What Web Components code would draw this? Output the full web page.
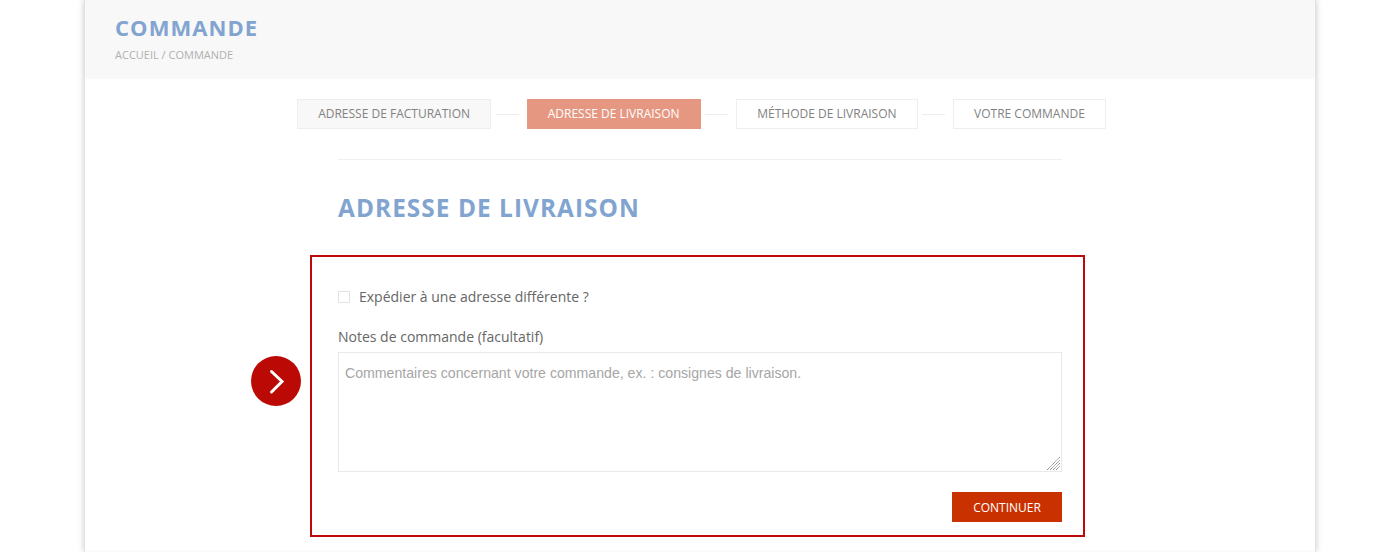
<!DOCTYPE html>
<html lang="fr">
<head>
<meta charset="utf-8">
<title>Commande</title>
<style>
html,body{margin:0;padding:0;background:#fff;height:552px;overflow:hidden}
body{font-family:"Open Sans",sans-serif}
</style>
</head>
<body>
<page-shell>
  <page-header title-text="COMMANDE" crumb="ACCUEIL / COMMANDE"></page-header>
  <step-bar>
    <step-item kind="done">ADRESSE DE FACTURATION</step-item>
    <step-item kind="active">ADRESSE DE LIVRAISON</step-item>
    <step-item>MÉTHODE DE LIVRAISON</step-item>
    <step-item>VOTRE COMMANDE</step-item>
  </step-bar>
  <checkout-section heading="ADRESSE DE LIVRAISON">
    <highlight-box>
      <check-row>Expédier à une adresse différente ?</check-row>
      <notes-field label="Notes de commande (facultatif)" placeholder="Commentaires concernant votre commande, ex. : consignes de livraison."></notes-field>
      <action-button>CONTINUER</action-button>
    </highlight-box>
  </checkout-section>
  <page-footer></page-footer>
</page-shell>
<script>
function def(name, css, html, init){
  customElements.define(name, class extends HTMLElement{
    constructor(){
      super();
      const r=this.attachShadow({mode:'open'});
      r.innerHTML='<style>'+css+'</style>'+html;
    }
    connectedCallback(){ if(init) init(this, this.shadowRoot); }
  });
}
def('page-shell',
 ':host{display:block;box-sizing:border-box;width:1232px;height:552px;margin:0 auto;background:#fff;border-left:1px solid #e3e3e3;border-right:1px solid #e3e3e3;box-shadow:0 0 6px rgba(0,0,0,.22);overflow:hidden}',
 '<slot></slot>');
def('page-header',
 ':host{display:block;box-sizing:border-box;height:79px;background:#f8f8f8;padding:12px 30px 0}'+
 'h1{margin:0;font:700 22px/30px "Open Sans",sans-serif;letter-spacing:1.05px;color:#82a4d0}'+
 'p{margin:5px 0 0;font:400 11px/15px "Open Sans",sans-serif;color:#b0b0b0}',
 '<h1></h1><p></p>',
 (h,r)=>{r.querySelector('h1').textContent=h.getAttribute('title-text');r.querySelector('p').textContent=h.getAttribute('crumb');});
def('step-bar',
 ':host{display:flex;justify-content:center;gap:35.5px;margin-top:20px;height:30px;padding-left:3px}',
 '<slot></slot>');
def('step-item',
 ':host{display:block;box-sizing:border-box;height:30px;padding:0 20px;border:1px solid #eeeeee;background:#fff;color:#828282;font:400 12px/28px "Open Sans",sans-serif;white-space:nowrap;position:relative}'+
 ':host([kind="done"]){background:#f8f8f8}'+
 ':host([kind="active"]){background:#e69781;border-color:#e69781;color:#fff;padding:0 20.2px;font-weight:500}'+
 ':host(:not(:last-child))::after{content:"";position:absolute;left:calc(100% + 5.5px);top:14px;width:23px;height:1px;background:#eeeeee}',
 '<slot></slot>');
def('checkout-section',
 ':host{display:block;width:724px;margin:30px auto 0}'+
 '.rule{height:1px;background:#f0f0f0}'+
 'h2{margin:0;padding-top:30px;font:700 24.4px/36px "Open Sans",sans-serif;letter-spacing:1.05px;color:#82a4d0}',
 '<div class="rule"></div><h2></h2><slot></slot>',
 (h,r)=>{r.querySelector('h2').textContent=h.getAttribute('heading');});
def('highlight-box',
 ':host{display:block;box-sizing:border-box;width:775px;height:282px;margin:29px 0 0 -28px;padding:31px 21px 0 26px;border:2px solid #bd0a0a;position:relative}'+
 '.dot{position:absolute;left:-61px;top:99px;width:50px;height:50px;border-radius:50%;background:#bb0a06;display:flex;align-items:center;justify-content:center}',
 '<div class="dot"><svg width="50" height="50" viewBox="0 0 50 50"><path d="M20.5 15.5 L31 25.5 L20.5 36" fill="none" stroke="#fff" stroke-width="3" stroke-linecap="round" stroke-linejoin="miter"/></svg></div><slot></slot>');
def('check-row',
 ':host{display:flex;align-items:center;gap:9px;height:18px;font:400 14px/18px "Open Sans",sans-serif;color:#666}'+
 '.box{width:12px;height:12px;box-sizing:border-box;border:1px solid #e2e2e2;background:#fff;flex:none}',
 '<span class="box"></span><slot></slot>');
def('notes-field',
 ':host{display:block;margin-top:22px;font:400 14px/18px "Open Sans",sans-serif;color:#666}'+
 'label{display:block;height:18px;margin-bottom:6px}'+
 '.area{box-sizing:border-box;height:120px;border:1px solid #e9e9e9;background:#fff;padding:11px 6px 0;font:14.13px/18px "Liberation Sans",sans-serif;color:#a6a6a6;position:relative}'+
 'svg{position:absolute;right:0;bottom:0}',
 '<label></label><div class="area" role="textbox"><span></span><svg width="15" height="15" viewBox="0 0 15 15"><path d="M1 14 L14 1 M4 14 L14 4 M7 14 L14 7 M10 14 L14 10" stroke="#808080" stroke-width="1" stroke-dasharray="1.2 .5" fill="none"/></svg></div>',
 (h,r)=>{r.querySelector('label').textContent=h.getAttribute('label');r.querySelector('.area span').textContent=h.getAttribute('placeholder');});
def('action-button',
 ':host{display:block;width:110px;height:30px;margin:20px 0 0 auto;background:#c93200;color:#fff;text-align:center;font:500 12px/31px "Open Sans",sans-serif}',
 '<slot></slot>');
def('page-footer',
 ':host{display:block;height:2px;margin-top:13px;background:#fbfbfb}',
 '');
</script>
</body>
</html>
